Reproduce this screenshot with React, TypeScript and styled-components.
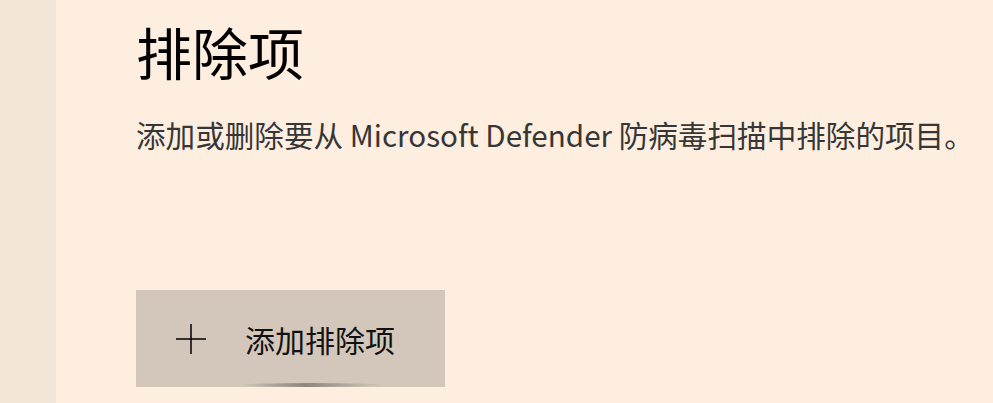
import React from "react";
import styled, { createGlobalStyle } from "styled-components";

const GlobalStyle = createGlobalStyle`
  html, body {
    margin: 0;
    padding: 0;
    height: 100%;
    overflow: hidden;
  }
  body {
    font-family: "Noto Sans CJK SC", "Noto Sans", sans-serif;
    background: #feeee0;
  }
`;

const Page = styled.div`
  display: flex;
  width: 993px;
  height: 403px;
`;

const Sidebar = styled.div`
  width: 56px;
  flex-shrink: 0;
  background: #f3e5d7;
`;

const Content = styled.main`
  flex: 1;
  background: #feeee0;
  padding: 23px 0 0 80px;
  display: flex;
  flex-direction: column;
`;

const Title = styled.h1`
  margin: 0;
  font-size: 56px;
  line-height: 56px;
  font-weight: 400;
  color: #000;
`;

const Description = styled.p`
  margin: 41px 0 0;
  font-size: 29.6px;
  line-height: 30px;
  color: #363636;
  white-space: nowrap;
`;

const AddButton = styled.button`
  position: relative;
  margin-top: 140px;
  width: 309px;
  height: 97px;
  border: none;
  background: #d3c7bb;
  display: flex;
  align-items: center;
  gap: 39px;
  padding: 0 0 0 40px;
  font-family: inherit;
  font-size: 30px;
  color: #111;
  cursor: pointer;

  &::after {
    content: "";
    position: absolute;
    left: 104px;
    bottom: 0;
    width: 143px;
    height: 4px;
    background: linear-gradient(
      to right,
      rgba(120, 110, 100, 0),
      rgba(120, 110, 100, 0.75) 45%,
      rgba(120, 110, 100, 0)
    );
    border-radius: 50%;
  }
`;

const PlusIcon = () => (
  <svg width="30" height="30" viewBox="0 0 30 30" aria-hidden="true">
    <path d="M15 0 V30 M0 15 H30" stroke="#000" strokeWidth="1.5" fill="none" />
  </svg>
);

export default function App() {
  return (
    <>
      <GlobalStyle />
      <Page>
        <Sidebar />
        <Content>
          <Title>排除项</Title>
          <Description>
            添加或删除要从 Microsoft Defender 防病毒扫描中排除的项目。
          </Description>
          <AddButton>
            <PlusIcon />
            <span>添加排除项</span>
          </AddButton>
        </Content>
      </Page>
    </>
  );
}
